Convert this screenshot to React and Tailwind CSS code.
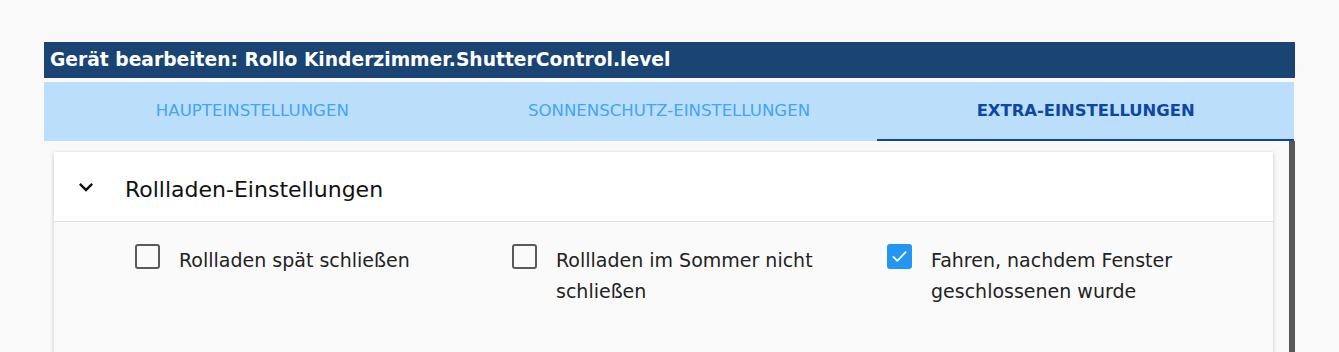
import { useState } from 'react'

const tabs = ['Haupteinstellungen', 'Sonnenschutz-Einstellungen', 'Extra-Einstellungen']

const options = [
    { label: 'Rollladen spät schließen', checked: false },
    { label: 'Rollladen im Sommer nicht schließen', checked: false },
    { label: 'Fahren, nachdem Fenster geschlossenen wurde', checked: true },
]

function Checkbox({ checked, onChange }) {
    return (
        <button
            onClick={onChange}
            className={
                checked
                    ? 'flex h-[25px] w-[25px] shrink-0 items-center justify-center rounded-[3px] bg-[#2196f3]'
                    : 'h-[25px] w-[25px] shrink-0 rounded-[3px] border-2 border-[#5a5a5a] bg-transparent'
            }
        >
            {checked && (
                <svg width="21" height="21" viewBox="0 0 24 24" fill="none" stroke="white" strokeWidth="2" strokeLinecap="round" strokeLinejoin="round">
                    <path d="M5 12.5l4.5 4.5L19 7" />
                </svg>
            )}
        </button>
    )
}

export default function App() {
    const [active, setActive] = useState(2)
    const [values, setValues] = useState(options.map(o => o.checked))

    return (
        <div className="min-h-[352px] bg-[#f9f9f9] pt-[42px] font-['DejaVu_Sans',sans-serif]">
            <div className="mx-[44px] w-[1251px]">
                {/* dialog title */}
                <div className="flex h-[36px] items-center bg-[#1a4473] px-[6px] text-[18.7px] font-bold text-white">
                    Gerät bearbeiten: Rollo Kinderzimmer.ShutterControl.level
                </div>

                {/* tabs */}
                <div className="mt-[4px] flex h-[59px] w-[1250px] bg-[#bbdefb]">
                    {tabs.map((t, i) => (
                        <button
                            key={t}
                            onClick={() => setActive(i)}
                            className={
                                i === active
                                    ? 'flex-1 border-b-2 border-[#0d47a1] pt-[2px] text-[16.4px] font-bold uppercase text-[#0d47a1]'
                                    : 'flex-1 border-b-2 border-transparent pt-[2px] text-[16.6px] uppercase text-[#42a5f5]'
                            }
                        >
                            {t}
                        </button>
                    ))}
                </div>

                {/* scroll area */}
                <div className="flex h-[211px]">
                    <div className="flex-1 overflow-hidden pl-[10px] pr-[16px] pt-[11px]">
                        <div className="bg-white shadow-[0_1px_4px_rgba(0,0,0,0.22)]">
                            <div className="flex h-[70px] items-center border-b border-[#dedede] pl-[18px]">
                                <svg width="28" height="28" viewBox="0 0 24 24" fill="#111">
                                    <path d="M16.59 8.59L12 13.17 7.41 8.59 6 10l6 6 6-6z" />
                                </svg>
                                <span className="ml-[25px] pt-[5px] text-[22px] text-[#111]">Rollladen-Einstellungen</span>
                            </div>
                            <div className="grid h-[140px] grid-cols-[377px_375px_1fr] bg-[#fafafa] pl-[81px] pt-[22px]">
                                {options.map((o, i) => (
                                    <label key={o.label} className="flex items-start gap-[19px]">
                                        <Checkbox
                                            checked={values[i]}
                                            onChange={() => setValues(v => v.map((x, j) => (j === i ? !x : x)))}
                                        />
                                        <span className="mt-[1px] w-[290px] text-[19px] leading-[31px] text-[#222]">{o.label}</span>
                                    </label>
                                ))}
                            </div>
                        </div>
                    </div>
                    <div className="w-[6px] bg-[#585858]" />
                </div>
            </div>
        </div>
    )
}
